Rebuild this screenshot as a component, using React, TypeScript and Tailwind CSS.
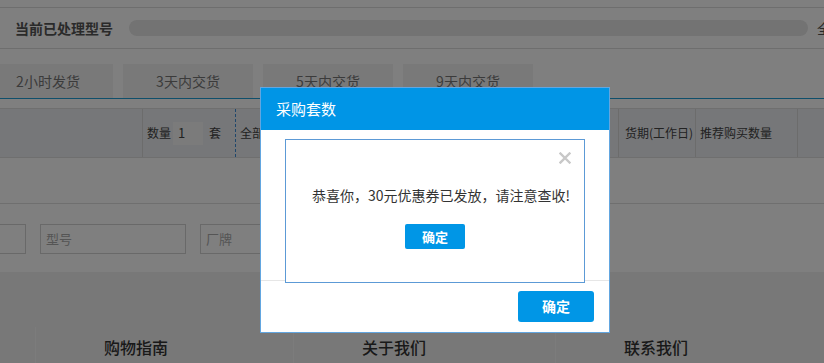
import React from 'react';

const font = { fontFamily: '"Microsoft YaHei","Noto Sans CJK SC","Liberation Sans",sans-serif' };

const tabs = ['2小时发货', '3天内交货', '5天内交货', '9天内交货'];
const footerCols = ['购物指南', '关于我们', '联系我们'];

const App: React.FC = () => {
    return (
        <div className="relative w-[824px] h-[363px] overflow-hidden bg-white text-[#333]" style={font}>
            {/* page underneath */}
            <div className="h-[8px] border-b border-[#dcdcdc]" />
            <div className="h-[41px] flex items-center pl-[15px] border-b border-[#dcdcdc] whitespace-nowrap">
                <span className="text-[14px] font-bold text-[#555] shrink-0">当前已处理型号</span>
                <div className="ml-[16px] w-[679px] h-[16px] rounded-full bg-[#e6e6e6] shrink-0" />
                <span className="ml-[9px] text-[14px] text-[#555] shrink-0">全部</span>
            </div>

            <div className="mt-[15px] flex gap-[10px] ml-[-17px] border-b border-[#1e9fd6] h-[35px]">
                {tabs.map(t => (
                    <div key={t} className="w-[130px] h-[34px] flex items-center justify-center bg-[#f3f3f3] text-[14px] text-[#777]">
                        {t}
                    </div>
                ))}
            </div>

            <div className="mt-[9px] h-[50px] flex bg-[#eceef2] border-y border-[#dedede] text-[12px] text-[#444] whitespace-nowrap">
                <div className="w-[143px] border-r border-[#d8d8d8]" />
                <div className="w-[92px] flex items-center pl-[4px] gap-[2px]">
                    <span>数量</span>
                    <div className="w-[30px] h-[23px] bg-[#f7f7f7] flex items-center pl-[5px] text-[13px]">1</div>
                    <span className="ml-[4px]">套</span>
                </div>
                <div className="w-[383px] flex items-center pl-[4px] border-l border-dashed border-[#3f8fd8]">全部</div>
                <div className="w-[77px] flex items-center pl-[6px] border-l border-[#d8d8d8]">货期(工作日)</div>
                <div className="w-[102px] flex items-center pl-[4px] border-l border-[#d8d8d8]">推荐购买数量</div>
                <div className="flex-1 border-l border-[#d8d8d8]" />
            </div>

            <div className="h-[46px] border-b border-[#dedede]" />

            <div className="mt-[20px] flex gap-[14px] ml-[-120px] text-[13px] text-[#aaa]">
                <div className="w-[146px] h-[30px] border border-[#d2d2d2]" />
                <div className="w-[146px] h-[30px] border border-[#d2d2d2] flex items-center pl-[5px]">型号</div>
                <div className="w-[146px] h-[30px] border border-[#d2d2d2] flex items-center pl-[5px]">厂牌</div>
            </div>

            <div className="mt-[18px] h-[91px] bg-[#f1f1f1] pt-[55px] pl-[35px] flex">
                {footerCols.map((c, i) => (
                    <div
                        key={c}
                        className={`${i === 1 ? 'w-[262px]' : 'w-[258px]'} border-l border-[#f8f8f8] pl-[68px] pt-[8px] text-[16px] font-medium text-[#333]`}
                    >
                        {c}
                    </div>
                ))}
            </div>

            {/* overlay */}
            <div className="absolute inset-0 bg-black/50" />

            {/* dialog */}
            <div className="absolute left-[260px] top-[87px] w-[350px] bg-white border border-[#62a6e0]">
                <div className="h-[42px] bg-[#0095e6] flex items-center pl-[15px] text-[15px] text-white">采购套数</div>
                <div className="h-[150px] pt-[9px] pl-[24px]">
                    <div className="relative z-10 w-[300px] h-[144px] bg-white border border-[#5c9ad6] flex flex-col items-center">
                        <svg className="absolute right-[13px] top-[12px]" width="12" height="12" viewBox="0 0 12 12">
                            <path d="M1.5 1.5 L10.5 10.5 M10.5 1.5 L1.5 10.5" stroke="#c8c8c8" strokeWidth="2.4" strokeLinecap="square" />
                        </svg>
                        <div className="mt-[45px] pl-[12px] text-[14px] text-[#333]">恭喜你，30元优惠券已发放，请注意查收!</div>
                        <div className="mt-[18px] w-[60px] h-[25px] rounded-[2px] bg-[#0096e6] flex items-center justify-center text-[13px] font-bold text-white">确定</div>
                    </div>
                </div>
                <div className="h-[52px] border-t border-[#e6e6e6] flex justify-end pt-[10px] pr-[15px]">
                    <div className="w-[76px] h-[31px] rounded-[3px] bg-[#0096e6] flex items-center justify-center text-[14px] font-bold text-white">确定</div>
                </div>
            </div>
        </div>
    );
};

export default App;
